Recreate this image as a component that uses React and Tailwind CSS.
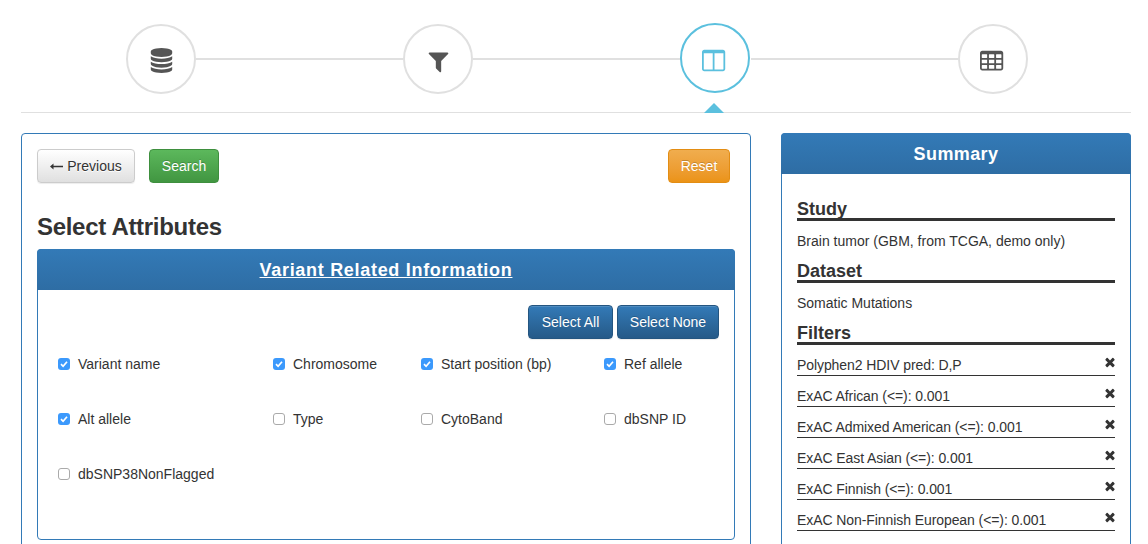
const dbPath = 'M896 768q237 0 443-43t325-127v170q0 69-103 128t-280 93.5-385 34.5-385-34.5-280-93.5-103-128v-170q119 84 325 127t443 43zm0 768q237 0 443-43t325-127v170q0 69-103 128t-280 93.5-385 34.5-385-34.5-280-93.5-103-128v-170q119 84 325 127t443 43zm0-384q237 0 443-43t325-127v170q0 69-103 128t-280 93.5-385 34.5-385-34.5-280-93.5-103-128v-170q119 84 325 127t443 43zm0-1152q208 0 385 34.5t280 93.5 103 128v128q0 69-103 128t-280 93.5-385 34.5-385-34.5-280-93.5-103-128v-128q0-69 103-128t280-93.5 385-34.5z';
const filterPath = 'M1595 295q17 41-14 70l-493 493v742q0 42-39 59-13 5-25 5-27 0-45-19l-256-256q-19-19-19-45v-486l-493-493q-31-29-14-70 17-39 59-39h1280q42 0 59 39z';
const columnsPath = 'M160 1536h608v-1152h-640v1120q0 13 9.500 22.500t22.500 9.500zm1376-32v-1120h-640v1152h608q13 0 22.500-9.500t9.500-22.500zm128-1216v1216q0 66-47 113t-113 47h-1344q-66 0-113-47t-47-113v-1216q0-66 47-113t113-47h1344q66 0 113 47t47 113z';
const tablePath = 'M512 1376v-192q0-14-9-23t-23-9h-320q-14 0-23 9t-9 23v192q0 14 9 23t23 9h320q14 0 23-9t9-23zm0-384v-192q0-14-9-23t-23-9h-320q-14 0-23 9t-9 23v192q0 14 9 23t23 9h320q14 0 23-9t9-23zm512 384v-192q0-14-9-23t-23-9h-320q-14 0-23 9t-9 23v192q0 14 9 23t23 9h320q14 0 23-9t9-23zm-512-768v-192q0-14-9-23t-23-9h-320q-14 0-23 9t-9 23v192q0 14 9 23t23 9h320q14 0 23-9t9-23zm512 384v-192q0-14-9-23t-23-9h-320q-14 0-23 9t-9 23v192q0 14 9 23t23 9h320q14 0 23-9t9-23zm512 384v-192q0-14-9-23t-23-9h-320q-14 0-23 9t-9 23v192q0 14 9 23t23 9h320q14 0 23-9t9-23zm-512-768v-192q0-14-9-23t-23-9h-320q-14 0-23 9t-9 23v192q0 14 9 23t23 9h320q14 0 23-9t9-23zm512 384v-192q0-14-9-23t-23-9h-320q-14 0-23 9t-9 23v192q0 14 9 23t23 9h320q14 0 23-9t9-23zm0-384v-192q0-14-9-23t-23-9h-320q-14 0-23 9t-9 23v192q0 14 9 23t23 9h320q14 0 23-9t9-23zm128-320v1088q0 66-47 113t-113 47h-1344q-66 0-113-47t-47-113v-1088q0-66 47-113t113-47h1344q66 0 113 47t47 113z';
const timesPath = 'M1490 1322q0 40-28 68l-136 136q-28 28-68 28t-68-28l-294-294-294 294q-28 28-68 28t-68-28l-136-136q-28-28-28-68t28-68l294-294-294-294q-28-28-28-68t28-68l136-136q28-28 68-28t68 28l294 294 294-294q28-28 68-28t68 28l136 136q28 28 28 68t-28 68l-294 294 294 294q28 28 28 68z';

const Glyph = ({ d, className }) => (
    <svg viewBox="0 0 1792 1792" fill="currentColor" className={className}><path d={d} /></svg>
);

const StepCircle = ({ d, active, iconClass }) => (
    <div className={`relative flex h-[70px] w-[70px] shrink-0 items-center justify-center rounded-full border-2 ${active ? 'border-[#5bc0de] text-[#5bc0de] -translate-x-px -translate-y-px' : 'border-[#e0e0e0] text-[#555555]'}`}>
        <Glyph d={d} className={`h-[25px] w-[25px] ${iconClass}`} />
        {active && (
            <div className="absolute left-[22px] top-[78px] h-0 w-0 border-x-[10px] border-b-[10px] border-x-transparent border-b-[#5bc0de]" />
        )}
    </div>
);

const Connector = () => <div className="h-[2px] flex-1 bg-[#e0e0e0]" />;

const attributes = [
    ['Variant name', true], ['Chromosome', true], ['Start position (bp)', true], ['Ref allele', true],
    ['Alt allele', true], ['Type', false], ['CytoBand', false], ['dbSNP ID', false],
    ['dbSNP38NonFlagged', false],
];

const filters = [
    'Polyphen2 HDIV pred: D,P',
    'ExAC African (<=): 0.001',
    'ExAC Admixed American (<=): 0.001',
    'ExAC East Asian (<=): 0.001',
    'ExAC Finnish (<=): 0.001',
    'ExAC Non-Finnish European (<=): 0.001',
];

const blueBtn = 'h-[34px] rounded border border-[#245580] bg-gradient-to-b from-[#337ab7] to-[#265a88] text-white [text-shadow:0_-1px_0_rgba(0,0,0,0.2)] shadow-[inset_0_1px_0_rgba(255,255,255,0.15),0_1px_1px_rgba(0,0,0,0.075)]';

const SummaryHeading = ({ children }) => (
    <h4 className="h-[24px] border-b-[3px] border-[#333333] pt-[2px] text-[18px] font-bold leading-[20px] text-[#333333]">{children}</h4>
);

const Checkbox = ({ checked }) => (
    checked ? (
        <span className="flex h-[12px] w-[12px] shrink-0 items-center justify-center rounded-[3px] bg-[#3b99fc]">
            <svg viewBox="0 0 12 12" className="h-[12px] w-[12px]" fill="none" stroke="white" strokeWidth="1.7">
                <path d="M3 6.2 L5.1 8.3 L9 3.8" />
            </svg>
        </span>
    ) : (
        <span className="h-[12px] w-[12px] shrink-0 rounded-[3px] border border-[#aaaaaa] bg-white" />
    )
);

export default function App() {
    return (
        <div className="h-[544px] w-[1148px] overflow-hidden bg-white text-[14px] leading-[20px] text-[#333333] font-['Liberation_Sans',Arial,sans-serif]">
            <div className="flex h-[112px] items-center px-[126px] pr-[120px] pt-[6px]">
                <StepCircle d={dbPath} iconClass="translate-y-px" />
                <Connector />
                <StepCircle d={filterPath} iconClass="translate-y-[2px]" />
                <Connector />
                <StepCircle d={columnsPath} active iconClass="translate-y-[2px]" />
                <Connector />
                <StepCircle d={tablePath} iconClass="translate-y-[2px]" />
            </div>
            <div className="mx-[21px] w-[1110px] border-t border-[#e0e0e0]" />

            <div className="flex gap-[30px] px-[21px] pt-[20px]">
                <div className="h-[500px] w-[730px] shrink-0 rounded border border-[#337ab7] px-[15px] pt-[15px]">
                    <div className="flex items-start">
                        <button className="flex h-[34px] w-[98px] items-center justify-center gap-[4px] rounded border border-[#cccccc] bg-gradient-to-b from-white to-[#e0e0e0] text-[#333333] [text-shadow:0_1px_0_#fff] shadow-[0_1px_1px_rgba(0,0,0,0.075)]">
                            <svg viewBox="0 0 13 7" className="h-[7px] w-[13px]" fill="#333333">
                                <path d="M0 3.5 L3.500 0.500 V2.800 H13 V4.200 H3.500 V6.500 Z" />
                            </svg>
                            Previous
                        </button>
                        <button className="ml-[14px] h-[34px] w-[70px] rounded border border-[#3e8f3e] bg-gradient-to-b from-[#5cb85c] to-[#419641] text-white [text-shadow:0_-1px_0_rgba(0,0,0,0.2)]">
                            Search
                        </button>
                        <button className="ml-auto mr-[5px] h-[34px] w-[62px] rounded border border-[#e38d13] bg-gradient-to-b from-[#f0ad4e] to-[#eb9316] text-white [text-shadow:0_-1px_0_rgba(0,0,0,0.2)]">
                            Reset
                        </button>
                    </div>
                    <h3 className="mt-[31px] text-[24px] font-bold leading-[26px] tracking-[-0.3px] text-[#333333]">Select Attributes</h3>
                    <div className="mt-[9px] h-[291px] w-[698px] rounded border border-[#337ab7]">
                        <div className="-mx-px -mt-px flex h-[41px] items-center justify-center rounded-t bg-gradient-to-b from-[#337ab7] to-[#2e6da4]">
                            <a className="text-[18px] font-bold tracking-[0.7px] text-white underline">Variant Related Information</a>
                        </div>
                        <div className="flex justify-end gap-[4px] pr-[15px] pt-[15px]">
                            <button className={`${blueBtn} w-[85px]`}>Select All</button>
                            <button className={`${blueBtn} w-[102px]`}>Select None</button>
                        </div>
                        <div className="grid grid-cols-[215px_148px_183px_1fr] auto-rows-[55px] pl-[20px] pt-[15px]">
                            {attributes.map(([label, checked]) => (
                                <label key={label} className="flex h-[20px] items-center gap-[8px]">
                                    <Checkbox checked={checked} />
                                    {label}
                                </label>
                            ))}
                        </div>
                    </div>
                </div>

                <div className="h-[500px] w-[350px] shrink-0 rounded border border-[#337ab7]">
                    <div className="-mx-px -mt-px flex h-[41px] items-center justify-center rounded-t bg-gradient-to-b from-[#337ab7] to-[#2e6da4] text-[18px] font-bold tracking-[0.4px] text-white">
                        Summary
                    </div>
                    <div className="px-[15px] pt-[23px]">
                        <SummaryHeading>Study</SummaryHeading>
                        <p className="mt-[10px] h-[20px]">Brain tumor (GBM, from TCGA, demo only)</p>
                        <div className="mt-[8px]"><SummaryHeading>Dataset</SummaryHeading></div>
                        <p className="mt-[10px] h-[20px]">Somatic Mutations</p>
                        <div className="mt-[8px]"><SummaryHeading>Filters</SummaryHeading></div>
                        <ul>
                            {filters.map((f) => (
                                <li key={f} className="flex h-[31px] items-start justify-between border-b border-[#333333] pt-[10px]">
                                    <span className="tracking-[-0.08px]">{f}</span>
                                    <Glyph d={timesPath} className="mr-[-2px] h-[14px] w-[14px] text-[#333333]" />
                                </li>
                            ))}
                        </ul>
                    </div>
                </div>
            </div>
        </div>
    );
}
